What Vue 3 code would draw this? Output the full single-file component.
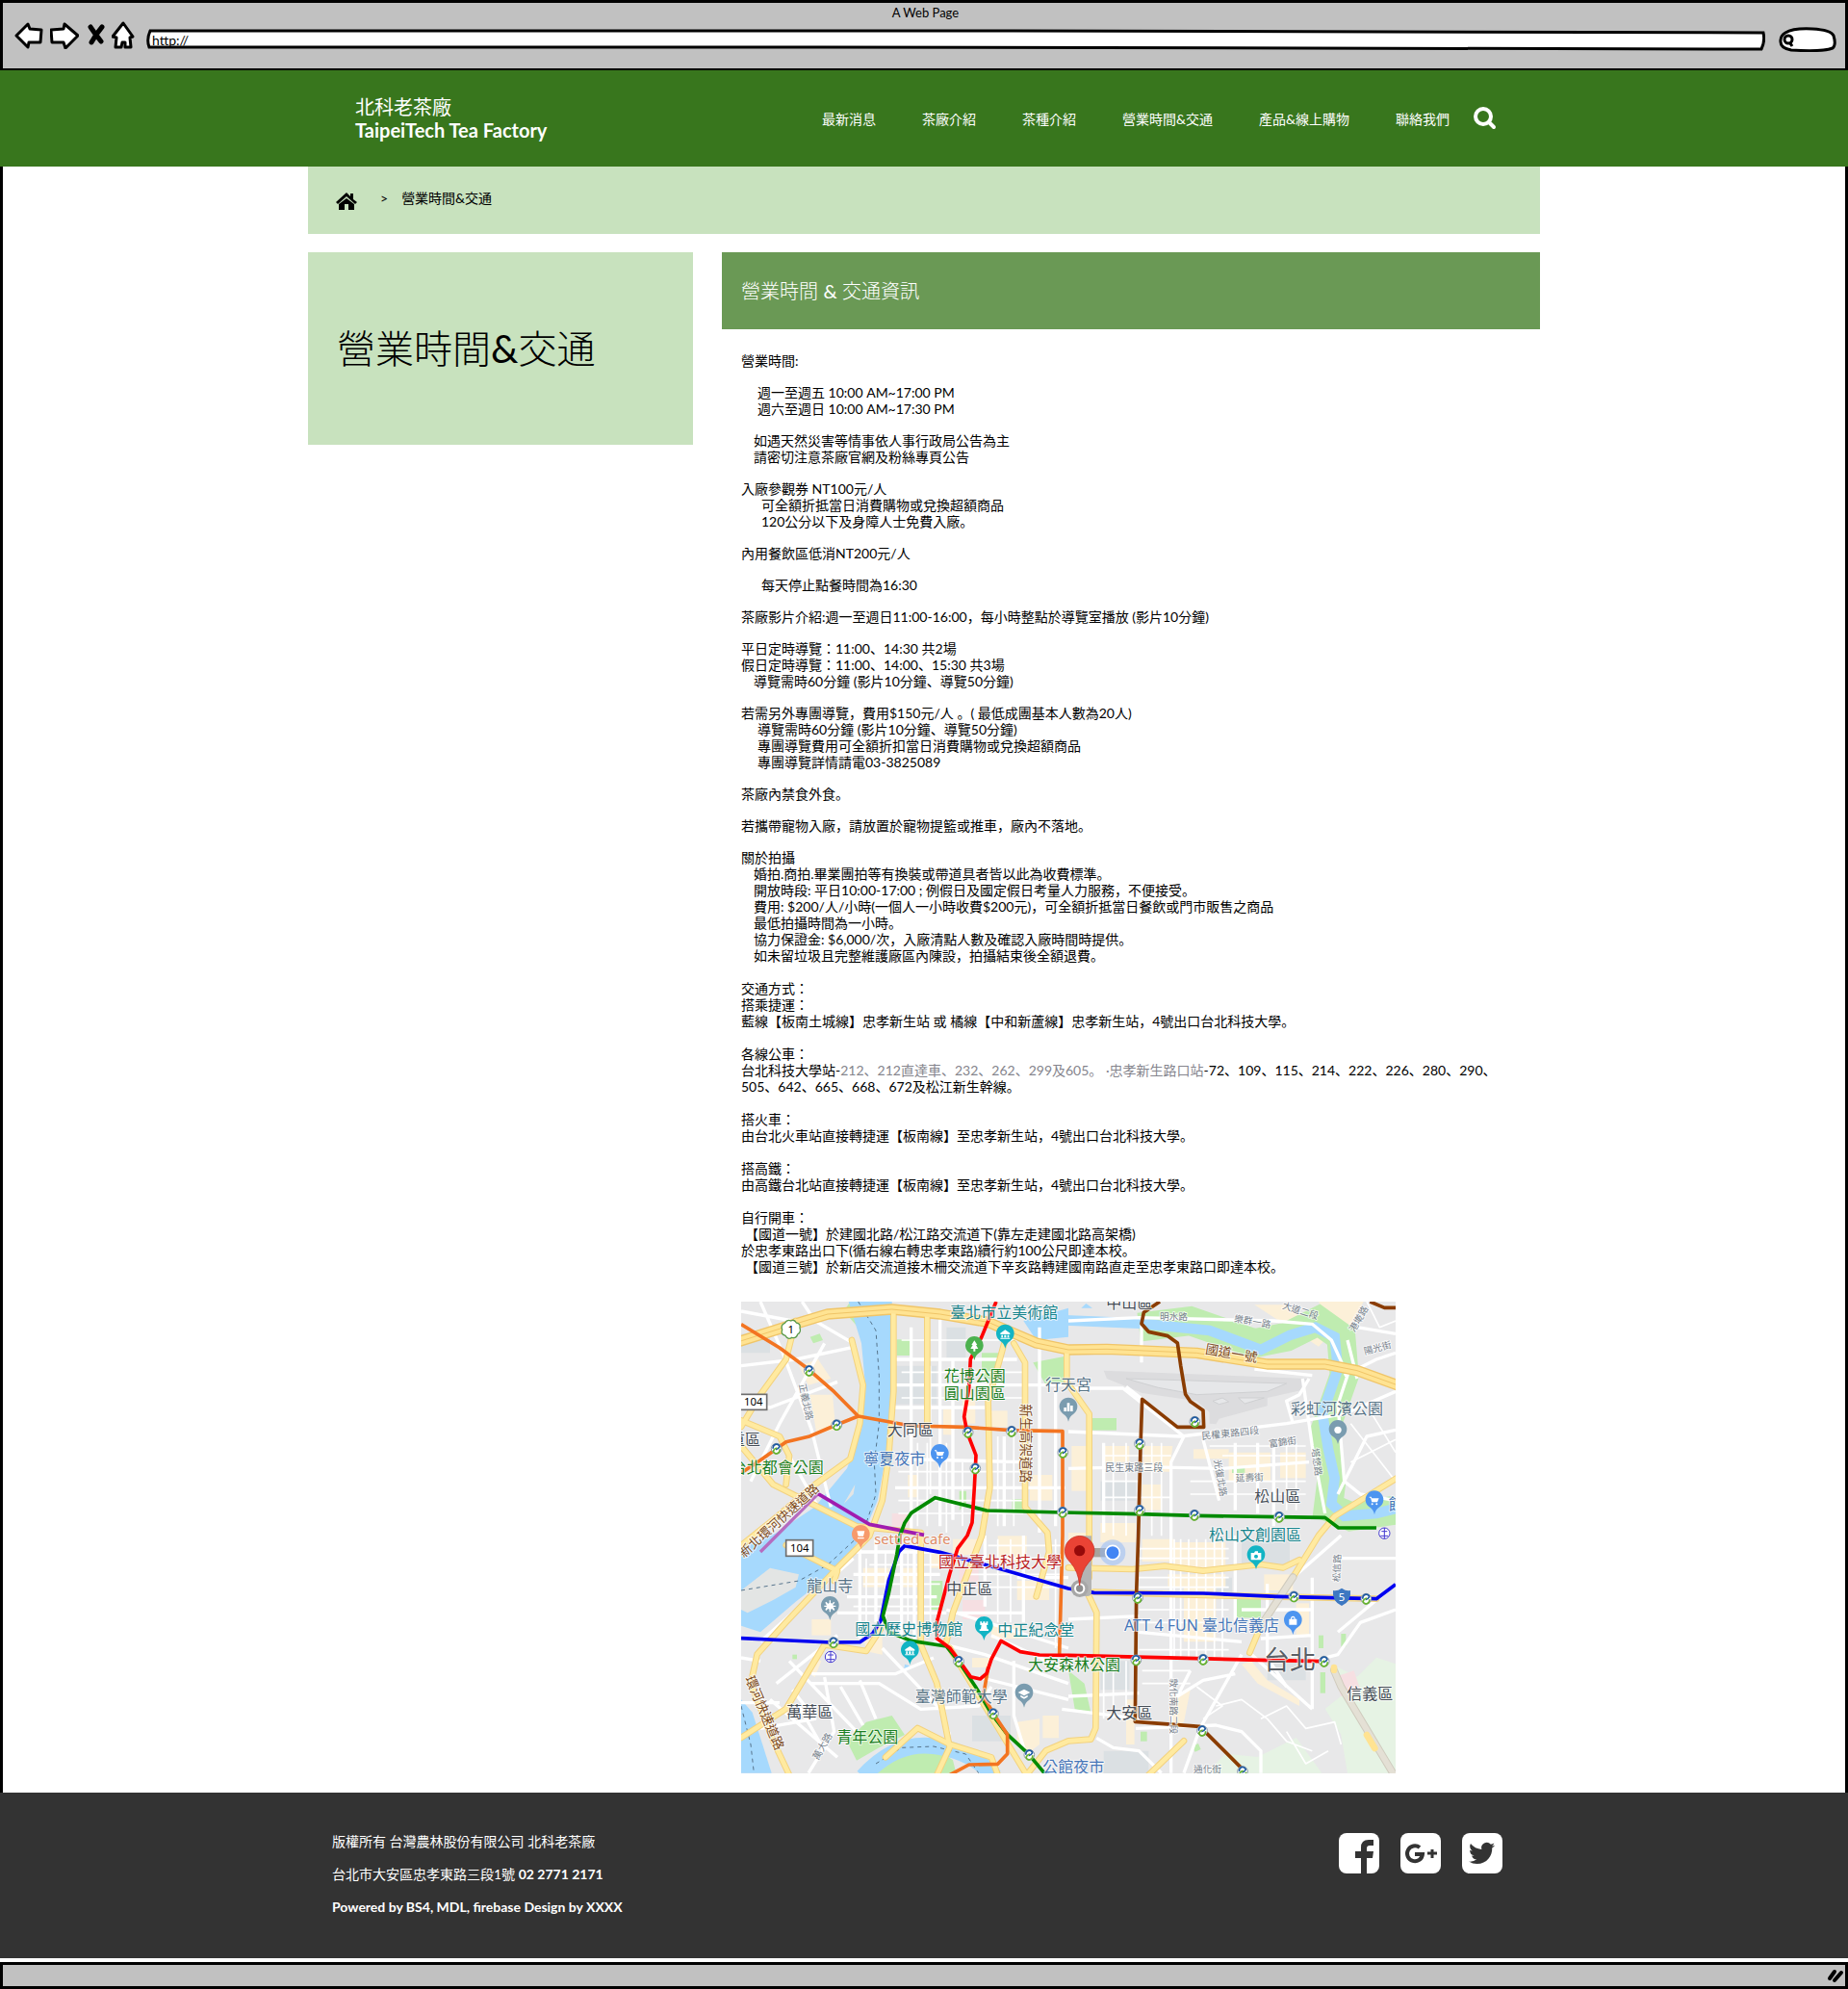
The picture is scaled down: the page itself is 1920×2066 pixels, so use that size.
<script setup>
import { ref } from 'vue'

const address = ref('http://')
const keyword = ref('')

const navItems = ['最新消息', '茶廠介紹', '茶種介紹', '營業時間&交通', '產品&線上購物', '聯絡我們']

// Each block is a paragraph; each line is [indent level, text]
const hours = [
  [[0, '營業時間:']],
  [[4, '週一至週五 10:00 AM~17:00 PM'], [4, '週六至週日 10:00 AM~17:30 PM']],
  [[3, '如遇天然災害等情事依人事行政局公告為主'], [3, '請密切注意茶廠官網及粉絲專頁公告']],
  [[0, '入廠參觀券 NT100元/人'], [5, '可全額折抵當日消費購物或兌換超額商品'], [5, '120公分以下及身障人士免費入廠。']],
  [[0, '內用餐飲區低消NT200元/人']],
  [[5, '每天停止點餐時間為16:30']],
  [[0, '茶廠影片介紹:週一至週日11:00-16:00，每小時整點於導覽室播放 (影片10分鐘)']],
  [[0, '平日定時導覽：11:00、14:30 共2場'], [0, '假日定時導覽：11:00、14:00、15:30 共3場'], [3, '導覽需時60分鐘 (影片10分鐘、導覽50分鐘)']],
  [[0, '若需另外專團導覽，費用$150元/人 。( 最低成團基本人數為20人)'], [4, '導覽需時60分鐘 (影片10分鐘、導覽50分鐘)'], [4, '專團導覽費用可全額折扣當日消費購物或兌換超額商品'], [4, '專團導覽詳情請電03-3825089']],
  [[0, '茶廠內禁食外食。']],
  [[0, '若攜帶寵物入廠，請放置於寵物提籃或推車，廠內不落地。']],
  [[0, '關於拍攝'], [3, '婚拍.商拍.畢業團拍等有換裝或帶道具者皆以此為收費標準。'], [3, '開放時段: 平日10:00-17:00 ; 例假日及國定假日考量人力服務，不便接受。'], [3, '費用: $200/人/小時(一個人一小時收費$200元)，可全額折抵當日餐飲或門市販售之商品'], [3, '最低拍攝時間為一小時。'], [3, '協力保證金: $6,000/次，入廠清點人數及確認入廠時間時提供。'], [3, '如未留垃圾且完整維護廠區內陳設，拍攝結束後全額退費。']]
]

const transport = [
  [[0, '交通方式：'], [0, '搭乘捷運：'], [0, '藍線【板南土城線】忠孝新生站 或 橘線【中和新蘆線】忠孝新生站，4號出口台北科技大學。']],
  [[0, '各線公車：'], [0, '台北科技大學站-', '212、212直達車、232、262、299及605。 ·忠孝新生路口站', '-72、109、115、214、222、226、280、290、'], [0, '505、642、665、668、672及松江新生幹線。']],
  [[0, '搭火車：'], [0, '由台北火車站直接轉捷運【板南線】至忠孝新生站，4號出口台北科技大學。']],
  [[0, '搭高鐵：'], [0, '由高鐵台北站直接轉捷運【板南線】至忠孝新生站，4號出口台北科技大學。']],
  [[0, '自行開車：'], [1, '【國道一號】於建國北路/松江路交流道下(靠左走建國北路高架橋)'], [0, '於忠孝東路出口下(循右線右轉忠孝東路)續行約100公尺即達本校。'], [1, '【國道三號】於新店交流道接木柵交流道下辛亥路轉建國南路直走至忠孝東路口即達本校。']]
]

const parks = [
  'M485 118h48v50h-48z', 'M750 160l60 0-20 90-40-20z', 'M910 190l100-20 0 80-60 10z', 'M680 590l22 0 0 40-22 20z',
  'M845 615h40v35h-40z', 'M1095 363h75v38h-75z', 'M1530 516h40v18h-40z', 'M1545 925h75v60h-75z', 'M1020 1150l50 40 20 90-50-10z',
  'M590 870h38v90h-38z', 'M1800 1040h15v40h-15z', 'M1870 1035h15v40h-15z', 'M1805 1155h16v65h-16z', 'M215 110l30-10 10 20-30 10z',
  'M330 1370l60-60 80-20 40 60-80 40-70 40z', 'M1245 1340h20v30h-20z', 'M1405 1385l20-8 8 18-18 8z', 'M160 1100h14v14h-14z',
  'M340 0l80 90-20 30-80-90z', 'M300 560l60-60 40-100 0 120-80 90z', 'M420 1469l60-70 90-30 90 60 10 40z'
]
const hills = ['M1890 1469l-20-120-50-80 50-40-10-90 60 30 60-60 60 20v340z', 'M1450 1469l60-60 100 10 120-60 80 110z']
const blocks = [
  'M215 290l70 0 10 110-60 10z', 'M180 200l60-20 40 60-70 20z', 'M630 335h30v80h-30z', 'M780 340h50v50h-50z', 'M520 540h30v70h-30z',
  'M1030 450h50v140h-50z', 'M1130 450l80 0v50h-80z', 'M1255 450l90 0-10 80h-80z', 'M1410 460h110v30h-110z', 'M1520 470h130v90h-130z',
  'M1680 470h80v80h-80z', 'M1250 570h60v80h-60z', 'M1600 10l90 0 150 90-40 40z', 'M1800 0l140 0-60 110-30-10z', 'M1120 690h110v60h-110z',
  'M1250 740h100v70h-100z', 'M1020 720h60v80h-60z', 'M1330 850h180v40h-180z', 'M1380 880h100v180h-100z', 'M1630 850h90v50h-90z',
  'M1730 940h40v100h-40z', 'M1560 1130l50 60 130 70v-20l-100-60-50-60z', 'M1200 1240h26v140h-26z', 'M1340 1230l60-20-20 100-40 20z',
  'M780 1010h100v40h-100z', 'M860 1310l70-10v80l-40 30-30-30z', 'M940 1290h50v70h-50z', 'M660 740h80v50h-80z', 'M800 730h90v80h-90z',
  'M380 830h80v60h-80z', 'M220 990h60v50h-60z', 'M500 830h50v60h-50z', 'M720 1110h60v30h-60z', 'M380 1040l60 0 0 60-50-10z',
  'M590 760h30v70h-30z', 'M860 870h100v60h-100z', 'M200 1150l20-40 30 10-20 50z', 'M690 300h40v80h-40z', 'M900 540h70v80h-70z', 'M1350 750h160v80h-160z'
]
const waters = [
  'M335 0H470L478 150 470 300 452 480 425 620 385 715 330 800 280 850 170 935 60 1030 0 1010V770L110 720 230 640 330 520 375 400 388 270 375 130z',
  'M880 60l140-40v90l-100 10z', 'M0 1240l35 40 60 189H0z', 'M1060 20l15-14 20 14z', 'M510 1130l14 4-2 14-14-4z'
]
const minorRoads = [
  'M0 30L160 60M60 0L130 160L220 400L280 640M0 200L170 180L360 140M0 310L90 330L300 250M30 560L120 380L260 130M150 480L240 640M190 0L230 60L350 130',
  'M480 180H860M480 260H1030M480 330H760M480 490L880 500M480 580H1010M530 80V720M620 50V700M660 180V680M820 420V700M930 80V720M980 270V700',
  'M1020 60L1240 50L1660 60L1780 70L1840 120L1890 230L1860 320L1880 560L1930 600L2040 620M1020 270H1190L1380 420L1340 500V729M1248 70V190M1200 265L1250 304',
  'M1020 405L1370 420L1700 380L1880 350L2040 280M1020 520L1240 515L1500 520L1770 500M1130 440V720M1440 430L1490 620M1540 440V650M1610 440V660M1660 440V700M1750 240L1780 450L1820 660',
  'M1780 230L1600 210M1770 240L1740 290L1700 310L1720 380M1880 230L1980 180L2040 160M1920 80L2040 100M1890 120L1920 240M1860 600L1950 420L2040 400',
  'M1020 990L1240 980M1340 729V1469M1540 729V1000M1240 1030L1560 1060M1560 960H1780M1640 880V1000M1780 860V1270M1620 1050L1780 1040M1580 1090L1780 1270',
  'M1560 1100L1430 1330L1380 1469M1400 1150L1360 1230L1440 1180L1540 1160M1020 1230L1240 1220M1108 1360L1160 1390L1240 1400L1310 1469M1240 1300L1000 1270',
  'M1230 1330L1480 1320L1560 1340L1620 1400V1469M1780 1120L1860 1100L1930 1000L2040 960M1860 1030L2040 880M1720 860L1870 729M1860 800H2040M1640 960V1110L1700 1200',
  'M360 780H620M350 850H620M330 920H610M300 970H640M370 750V1050M420 740V1000M500 780V1060M540 770V1060M60 1060L350 800M110 1190L300 1040',
  'M220 1160H480L600 1110M220 1190L430 1190L560 1270L740 1260L780 1200M90 1240L300 1420M150 1120L360 1340M260 1170L290 1340L210 1469M440 1080L620 1270L650 1350',
  'M640 960L1020 1080M660 970H880M780 1040L1020 1150M850 1120V1290L890 1420M740 1170L1020 1240M600 1060L760 1100L1020 1190M860 860H1020M760 729V950M880 729V1000',
  'M0 1250H120M0 1110L60 1120M160 1210L230 1300L60 1330M180 1260L260 1400M310 1200L380 1320M370 1180L420 1300'
]
const fineRoads = [
  'M1350 740V1110M1370 740V1110M1395 740V1110M1420 740V1110M1448 740V1110M1475 740V1110M1500 740V1110M1240 770H1520M1240 800H1520M1240 860H1520M1240 890H1520M1240 960H1520M1240 1000H1520M1240 1085H1520',
  'M1130 480H1340M1130 560H1240M1130 610H1340M1160 440V730M1200 440V730M1280 440V730M1310 440V730M1400 560H1760M1400 600H1760M1460 450H1760M1500 480H1760M1700 440V650M1730 440V650',
  'M640 440V720M690 500V700M550 440V700M580 440V700M490 530H880M490 620H880M490 660H880M800 420V700M850 420V700M500 300H880M590 200V600M500 120H880M500 220H880',
  'M390 800V1000M450 780V1000M520 780V1050M590 780V1000M400 820H620M380 880H620M350 950H620M770 760H1000M770 800H1000M700 850H1000M700 890H1000M800 740V1000M840 740V1000M980 740V1080M1130 1120V1300M1160 1120V1300M1200 1120V1300M1250 1150H1400M1250 1190H1400',
  'M1620 1300L1700 1260L1760 1330L1850 1310L1870 1380M1480 1260L1560 1240L1640 1300L1700 1370L1780 1400M1420 1200L1500 1260L1440 1300M1960 340L2040 470M1900 380L2040 560M1900 500L2040 430M1950 0L1990 80L2040 60M1700 1340L1760 1440L1830 1400'
]
const yellowRoads = [
  'M475 30V280L460 480L440 620L400 730L300 830L140 999L50 1099L30 1189L100 1369L150 1475', 'M170 60L140 180L60 290L0 390', 'M345 120L380 260L370 380L340 490L230 570L100 680L0 760',
  'M0 370L120 420L150 480L140 570', 'M0 450L100 570L360 700L560 720', 'M580 40V380', 'M820 130L770 310L775 580L750 730L660 969L640 1060', 'M850 130L885 190V640L955 720L960 780L920 919',
  'M1015 150V250L1085 350V860', 'M1020 829L1220 834L1320 824L1440 839L1620 819L1690 829L1740 805', 'M2045 549L1850 669L1800 729L1720 859', 'M1620 1010L1585 1094',
  'M1080 909L1108 969L1105 1329L1090 1364L1020 1369L950 1399L890 1475', 'M1380 1369L1270 1475', 'M560 729V1069L610 1189L650 1389L610 1475', 'M0 1359L140 1269L260 1069L390 1089L435 1020',
  'M650 1079L890 1475', 'M450 1420L550 1329L650 1379L780 1420L800 1475', 'M140 759L300 839L290 870', 'M1980 926L1440 915L1100 905'
]
const highways = ['M-5 124L170 69L270 39L470 24L620 39L770 64L920 129L1020 150L1140 148L1420 160L1640 195L1820 195L1920 215L2045 260']

const transit = [
  { c: '#a01cb0', d: 'M240 599L400 694L570 727' },
  { c: '#f37421', d: 'M0 71L120 144L210 211L290 281L365 357L530 387L700 391L840 401L1002 404L1002 729L992 1099' },
  { c: '#f37421', d: 'M0 534L60 494L140 437L210 421L290 387L365 357' },
  { c: '#0000f0', d: 'M0 1049L150 1056L280 1062L370 1061L410 1034L435 994L460 869L492 779L510 761L620 781L830 839L1020 894L1100 907L1440 909L1670 919L1980 926L2040 881' },
  { c: '#008a00', d: 'M1980 705H1862L1820 673L1670 671L1420 667L1240 662L1002 657L765 651L605 611L530 659L510 689L495 729L485 789L460 909L442 979L460 1029L530 1057L640 1074L680 1124L730 1199L780 1284L830 1349L895 1409L950 1475' },
  { c: '#f37421', d: 'M770 1139L755 1229L790 1289L830 1349V1409L800 1441L710 1443L650 1475' },
  { c: '#ff0000', d: 'M795 0L750 109L715 179L710 269L695 359L705 409L732 479L727 579L720 689L705 729L675 769L650 849L610 999V1049L650 1079L680 1119L715 1169L745 1176L765 1159L780 1114L810 1057L870 1091L930 1101L1020 1102L1420 1112L1620 1117L1815 1121' },
  { c: '#8a3c00', d: 'M1305 0L1255 34L1248 69L1270 94L1330 107L1360 129L1370 199L1385 289L1400 311L1440 339L1442 391H1360L1250 304L1245 449L1238 729L1232 909L1228 1309L1430 1324L1565 1459' },
  { c: '#8a3c00', d: 'M1960 0L2005 19H2040' }
]

const stations = [
  [212, 215], [298, 384], [110, 458], [707, 407], [843, 404], [730, 520], [1003, 470], [1002, 656], [1414, 374], [1242, 443], [1242, 650], [1413, 665], [1677, 671],
  [288, 1062], [678, 1121], [786, 1284], [898, 1412], [1236, 923], [1723, 919], [1948, 926], [1231, 1117], [1440, 1115], [1817, 1121], [1437, 1337], [1563, 1464]
]

const glyphs = {
  museum: 'M-15-4L0-14L15-4V0H-15zM-12 2H-7V10H-12zM-3 2H3V10H-3zM7 2H12V10H7zM-15 11H15V14H-15z',
  tree: 'M0-18L9-4H5L12 8H3V16H-3V8H-12L-5-4H-9z',
  cart: 'M-16-12H-10L-8-7H14L9 5H-8L-12-9H-16zM-7 8A3 3 0 1 0-7 14A3 3 0 1 0-7 8M7 8A3 3 0 1 0 7 14A3 3 0 1 0 7 8',
  bars: 'M-14 0H-6V12H-14zM-4-14H4V12H-4zM6-6H14V12H6z',
  dot: 'M0-11A11 11 0 1 0 0 11A11 11 0 1 0 0-11',
  cup: 'M-12-12H12L8 4H-8zM-10 8H10V12H-10z',
  wheel: 'M-2-18H2V-10A10 10 0 0 1 6-8L12-14L15-11L9-5A10 10 0 0 1 10-2H18V2H10L15 11L12 14L6 8L2 10V18H-2V10L-6 8L-12 14L-15 11L-10 2H-18V-2H-10L-15-11L-12-14L-6-8L-2-10z',
  tower: 'M-12-15H-7V-11H-3V-15H3V-11H7V-15H12V-4H8L10 9H14V14H-14V9H-10L-8-4H-12z',
  school: 'M0-13L19-3L0 7L-19-3zM-11 5L0 11L11 5V11L0 17L-11 11z',
  camera: 'M-16-8H-6L-3-13H6V-8H16V14H-16zM0-3A6 6 0 1 1 0 9A6 6 0 1 1 0-3',
  bag: 'M-12-5H-7A7 9 0 0 1 7-5H12V13H-12zM-4-5H4A4 5 0 0 0-4-5'
}
const pins = [
  [823, 102, '#12b4c4', 'museum'], [727, 139, '#4bb14e', 'tree'], [619, 475, '#4d95f0', 'cart'], [1020, 330, '#7a9caf', 'bars'], [1860, 400, '#7a9caf', 'dot'], [1974, 620, '#4d95f0', 'cart'],
  [373, 727, '#f79a6b', 'cup'], [277, 949, '#7a9caf', 'wheel'], [526, 1088, '#12b4c4', 'museum'], [757, 1012, '#12b4c4', 'tower'], [882, 1221, '#7a9caf', 'school'], [1605, 791, '#12b4c4', 'camera'], [1720, 994, '#4d95f0', 'bag']
]

const TEAL = '#16848c'
const PARK = '#1b7f22'
const SLATE = '#587487'
const DARK = '#454d56'
const BLUE = '#4676b8'
const GREY = '#77828c'
const BROWN = '#7c4a1c'
// [text, x, baseline, size, colour, rotation]
const labels = [
  ['臺北市立美術館', 652, 51, 48, TEAL, 0], ['花博公園', 632, 249, 48, PARK, 0], ['圓山園區', 632, 303, 48, PARK, 0], ['行天宮', 948, 276, 48, SLATE, 0],
  ['大同區', 455, 418, 48, DARK, 0], ['寧夏夜市', 382, 507, 48, BLUE, 0], ['台北都會公園', -31, 534, 48, PARK, 0], ['三重區', -84, 448, 48, DARK, 0],
  ['settled cafe', 415, 755, 44, '#e08a62', 0], ['新生高架道路', 873, 319, 41, BROWN, 90], ['新北環河快速道路', 8, 800, 40, BROWN, -42], ['正義北路', 180, 258, 29, GREY, 78],
  ['環河快速道路', 12, 1174, 41, BROWN, 67], ['龍山寺', 205, 903, 48, SLATE, 0], ['國立歷史博物館', 355, 1037, 48, TEAL, 0], ['中正區', 640, 911, 48, DARK, 0],
  ['中正紀念堂', 799, 1042, 48, TEAL, 0], ['大安森林公園', 894, 1149, 48, PARK, 0], ['國立臺北科技大學', 615, 827, 48, '#bb1f25', 0], ['臺灣師範大學', 542, 1247, 48, SLATE, 0],
  ['萬華區', 142, 1296, 48, DARK, 0], ['青年公園', 298, 1374, 48, PARK, 0], ['萬大路', 240, 1430, 30, GREY, -60], ['公館夜市', 940, 1466, 48, BLUE, 0],
  ['中山區', 1138, 21, 48, DARK, 0], ['明水路', 1305, 56, 29, GREY, 0], ['樂群一路', 1535, 62, 29, GREY, 10], ['港墘路', 1912, 97, 29, GREY, -60], ['陽光街', 1944, 166, 29, GREY, -15],
  ['大道二段', 1685, 20, 29, GREY, 18], ['國道一號', 1445, 161, 41, BROWN, 10], ['彩虹河濱公園', 1713, 351, 48, SLATE, 0], ['民權東路四段', 1436, 430, 30, GREY, -6],
  ['富錦街', 1646, 454, 29, GREY, -8], ['民生東路三段', 1135, 527, 30, GREY, 0], ['光復北路', 1474, 494, 29, GREY, 80], ['延壽街', 1542, 561, 29, GREY, -3], ['塔悠路', 1778, 458, 29, GREY, 82],
  ['松山區', 1600, 624, 48, DARK, 0], ['松山文創園區', 1458, 744, 48, TEAL, 0], ['館', 2018, 649, 48, BLUE, 0], ['松信路', 1866, 874, 29, GREY, -88],
  ['ATT 4 FUN 臺北信義店', 1194, 1026, 48, BLUE, 0], ['台北', 1628, 1146, 82, '#5a5f66', 0], ['信義區', 1888, 1240, 48, DARK, 0], ['大安區', 1138, 1298, 48, DARK, 0],
  ['敦化南路二段', 1338, 1174, 29, GREY, 90], ['通化街', 1410, 1467, 29, GREY, 0]
]
</script>

<template>
  <div class="browser">
    <header class="chrome">
      <div class="chrome-title">A Web Page</div>
      <div class="toolbar">
        <div class="tools">
          <button type="button" aria-label="Back">
            <svg width="30" height="28" viewBox="0 0 30 28"><path class="ink" d="M2 14L14 2L16 7L28 8L27 21L15 21L14 26Z" /></svg>
          </button>
          <button type="button" aria-label="Forward">
            <svg width="30" height="28" viewBox="0 0 30 28"><path class="ink" d="M1 8L14 7L15 2L29 14L16 27L14 21L2 21Z" /></svg>
          </button>
          <button type="button" aria-label="Stop">
            <svg width="20" height="28" viewBox="0 0 20 28"><path d="M5 5Q9 11 16 20M17 5Q11 12 6 21" fill="none" stroke="#000" stroke-width="5" stroke-linecap="round" /></svg>
          </button>
          <button type="button" aria-label="Home">
            <svg width="24" height="30" viewBox="0 0 24 30"><path class="ink" d="M12 2L22 16L19 17L20 27L14 27L14 22L11 22L10 27L4 27L5 17L1 16Z" /></svg>
          </button>
        </div>
        <div class="sketch-field address">
          <svg viewBox="0 0 1680 24" preserveAspectRatio="none" aria-hidden="true"><path d="M4 3L900 3L1678 5Q1680 14 1676 22L700 20L3 20Q0 12 4 3Z" /></svg>
          <input v-model="address" type="text" aria-label="Address" />
        </div>
        <div class="sketch-field lookup">
          <svg viewBox="0 0 60 26" aria-hidden="true">
            <path d="M7 6Q15 1 35 2Q54 3 57 9Q60 19 56 22Q45 26 13 24Q1 22 2 14Q2 9 7 6Z" />
            <circle cx="10" cy="13" r="4" /><path d="M12 17L14 20" />
          </svg>
          <input v-model="keyword" type="text" aria-label="Search the web" />
        </div>
      </div>
    </header>

    <div class="site-header">
      <div class="container site-bar">
        <a class="brand" href="#"><span>北科老茶廠</span><b>TaipeiTech Tea Factory</b></a>
        <nav aria-label="主選單">
          <a v-for="item in navItems" :key="item" href="#">{{ item }}</a>
        </nav>
        <button class="site-search" type="button" aria-label="搜尋">
          <svg width="26" height="26" viewBox="0 0 26 26"><circle cx="11" cy="11" r="8" fill="none" stroke="#fff" stroke-width="4" /><path d="M17 17L22 22" stroke="#fff" stroke-width="4" stroke-linecap="round" /></svg>
        </button>
      </div>
    </div>

    <main class="page">
      <div class="container">
        <nav class="crumbs" aria-label="麵包屑">
          <a href="#" aria-label="首頁">
            <svg width="22" height="18" viewBox="0 0 22 18"><path d="M11 0L15 4V1H18V7L22 10L20 12L11 4L2 12L0 10Z" /><path d="M11 6L19 12V18H13V12H9V18H3V12Z" /></svg>
          </a>
          <span>&gt;</span>
          <span>營業時間&amp;交通</span>
        </nav>
        <div class="columns">
          <aside><h1>營業時間<b>&amp;</b>交通</h1></aside>
          <section class="content">
            <h2>營業時間 <b>&amp;</b> 交通資訊</h2>
            <div class="article">
              <div class="hours">
                <div v-for="(block, i) in hours" :key="i">
                  <p v-for="line in block" :key="line[1]" :class="'indent-' + line[0]">{{ line[1] }}</p>
                </div>
              </div>
              <div class="transport">
                <div v-for="(block, i) in transport" :key="i">
                  <p v-for="line in block" :key="line[1]" :class="'indent-' + line[0]">{{ line[1] }}<span v-if="line[2]" class="muted">{{ line[2] }}</span>{{ line[3] }}</p>
                </div>
              </div>

              <svg class="map" viewBox="0 0 2040 1470" role="img" aria-label="國立臺北科技大學 地圖">
                <rect width="2040" height="1470" fill="#e8e8e9" />
                <path d="M480 200h130v120h-130zM640 80h60v100h-60zM1130 1400h140v70h-140zM1440 860h90v60h-90zM1120 1120h90v90h-90zM1640 1120h120v60h-120zM720 1290h120v80h-120zM1120 560h110v60h-110zM0 100h90v60H0zM1560 740h150v80h-150z" fill="#dbe0e3" />
                <path v-for="d in hills" :key="d" :d="d" fill="#e6f3e4" />
                <path v-for="d in blocks" :key="d" :d="d" fill="#fcf0d8" />
                <path d="M680 830h60v60h-60zM690 930h70v60h-70zM470 660h60v40h-60zM1850 1170l60-20 20 60-60 20z" fill="#f6dfe2" />
                <path d="M1240 80L1400 60L1600 130L1700 110L1800 60L1870 110L1880 230L1820 400L1840 560L1830 640L1900 670L2040 650" fill="none" stroke="#bfecb0" stroke-width="90" />
                <path v-for="d in parks" :key="d" :d="d" fill="#bfecb0" />
                <path v-for="d in waters" :key="d" :d="d" fill="#a6d9fd" />
                <path d="M1010 58L1240 68L1460 90L1620 150L1710 105L1790 80L1850 110L1860 210L1812 350L1830 460L1850 550L1840 630L1880 668L1980 660L2040 645" fill="none" stroke="#a6d9fd" stroke-width="32" />
                <path d="M380 1480Q480 1370 600 1385T790 1480" fill="none" stroke="#a6d9fd" stroke-width="50" />
                <path d="M0 900L90 830L180 850L170 890L100 930L20 970L0 960ZM320 630L355 570L350 600Z" fill="#e3e5e4" />
                <path d="M1130 215L1765 240L1750 275L1640 300L1640 325L1490 365L1480 382L1460 380V345L1420 310L1250 285L1140 240Z" fill="#dcdcde" />
                <path d="M1200 240L1700 255L1640 280L1420 290L1300 268ZM1470 310L1500 300L1520 312L1490 320ZM1550 300L1630 300L1570 318Z" fill="#e6e7e9" stroke="#cfd0d2" stroke-width="3" />
                <g fill="none" stroke="#fff" stroke-linejoin="round">
                  <path v-for="d in fineRoads" :key="d" :d="d" stroke-width="5" />
                  <path v-for="d in minorRoads" :key="d" :d="d" stroke-width="10" />
                </g>
                <path d="M365 0L420 90L430 230L430 380L415 500L420 600L390 690M0 900L180 870L270 820L400 700M0 1260L30 1380L40 1469M420 1440L500 1390L600 1386L700 1410L740 1469" fill="none" stroke="#56748c" stroke-width="3" stroke-dasharray="12 12" />
                <g fill="none" stroke-linejoin="round" stroke-linecap="round">
                  <path v-for="d in yellowRoads" :key="'e' + d" :d="d" stroke="#f3d27e" stroke-width="20" />
                  <path v-for="d in highways" :key="'e' + d" :d="d" stroke="#f0c568" stroke-width="34" />
                  <path v-for="d in yellowRoads" :key="d" :d="d" stroke="#ffeaa0" stroke-width="14" />
                  <path v-for="d in highways" :key="d" :d="d" stroke="#ffe392" stroke-width="26" />
                  <path v-for="d in highways" :key="'m' + d" :d="d" stroke="#f0c568" stroke-width="3" />
                  <path d="M1848 1149L1870 1200L2035 1475M1720 859L1620 1010" stroke="#cfcabd" stroke-width="24" />
                  <path d="M1848 1149L1870 1200L2035 1475M1720 859L1620 1010" stroke="#e4e0d5" stroke-width="18" />
                  <path d="M1950 1350L1975 1392M1848 1140V1148" stroke="#ffe392" stroke-width="20" />
                </g>
                <path d="M60 780L240 599" stroke="#b56cc0" stroke-width="10" />
                <path v-for="l in transit" :key="l.d" :d="l.d" :stroke="l.c" fill="none" stroke-width="11" stroke-linejoin="round" />

                <g v-for="s in stations" :key="s.join()" :transform="`translate(${s[0]} ${s[1]})`" fill="none">
                  <circle r="16" fill="#fff" stroke="#8a99a8" stroke-width="3" />
                  <path d="M-10 0A10 10 0 0 1 10-6Q6 2-2 3" stroke="#1e5aa0" stroke-width="5" />
                  <path d="M10 2A10 10 0 0 1-10 8Q-6-1 2-2" stroke="#66b32e" stroke-width="5" />
                </g>
                <g v-for="m in [[279, 1107], [2005, 722]]" :key="m[0]" :transform="`translate(${m[0]} ${m[1]})`" fill="#fff" stroke="#4338cf" stroke-width="3">
                  <circle r="17" /><path d="M0-17V17M-9-6H9M-12 8H12" />
                </g>

                <rect x="-10" y="289" width="90" height="48" fill="#fff" stroke="#6e6e6e" stroke-width="5" />
                <rect x="140" y="743" width="84" height="50" fill="#fff" stroke="#6e6e6e" stroke-width="5" />
                <path d="M155 60Q165 54 172 66Q186 68 183 82Q188 96 176 102Q172 116 158 112Q146 120 138 106Q122 102 128 88Q122 72 136 67Q144 54 155 60Z" fill="#fff" stroke="#5a9a4a" stroke-width="4" />
                <path d="M1845 900Q1858 903 1872 893Q1886 903 1899 900Q1903 934 1872 948Q1841 934 1845 900Z" fill="#3d78c2" />
                <g class="badge">
                  <text x="38" y="325">104</text><text x="182" y="780">104</text><text x="155" y="100">1</text><text x="1872" y="932" fill="#fff">5</text>
                </g>

                <g class="map-labels">
                  <text v-for="t in labels" :key="t[0] + t[1]" :transform="`translate(${t[1]} ${t[2]}) rotate(${t[5]})`" :font-size="t[3]" :fill="t[4]">{{ t[0] }}</text>
                </g>

                <g v-for="p in pins" :key="p[0]" :transform="`translate(${p[0]} ${p[1]})`">
                  <path d="M0 44Q-3 28-16 20A28 28 0 1 1 16 20Q3 28 0 44Z" :fill="p[2]" />
                  <path :d="glyphs[p[3]]" fill="#fff" fill-rule="evenodd" />
                </g>

                <path d="M1050 730H1092V905Q1092 918 1078 918H1050Z" fill="#b4b4b4" />
                <path d="M1085 782H1158" stroke="#a8a39c" stroke-width="28" />
                <circle cx="1158" cy="782" r="40" fill="#8fb8f5" fill-opacity="0.5" />
                <circle cx="1158" cy="782" r="22" fill="#4285f4" stroke="#fff" stroke-width="5" />
                <circle cx="1055" cy="894" r="27" fill="#a7a7a7" />
                <circle cx="1055" cy="894" r="14" fill="#8e8e8e" stroke="#fff" stroke-width="6" />
                <path d="M1055 885Q1051 840 1026 812A46 46 0 1 1 1084 812Q1059 840 1055 885Z" fill="#ea4335" stroke="#c5291c" stroke-width="2" />
                <circle cx="1055" cy="776" r="17" fill="#960a0a" />
              </svg>
            </div>
          </section>
        </div>
      </div>
    </main>

    <footer class="site-footer">
      <div class="container footer-bar">
        <div class="legal">
          <p>版權所有 台灣農林股份有限公司 北科老茶廠</p>
          <p>台北市大安區忠孝東路三段1號 <b>02 2771 2171</b></p>
          <p><b>Powered by BS4, MDL, firebase Design by XXXX</b></p>
        </div>
        <div class="social">
          <a href="#" aria-label="Facebook">
            <svg viewBox="0 0 42 42"><rect width="42" height="42" rx="8" fill="#fff" /><path d="M23 42V26H17V19H23V15Q23 7 31 7H36V13H32Q29 13 29 16V19H36L35 26H29V42Z" fill="#333" /></svg>
          </a>
          <a href="#" aria-label="Google Plus">
            <svg viewBox="0 0 42 42"><rect width="42" height="42" rx="8" fill="#fff" /><path d="M20 15A8 8 0 1 0 23 22H15" fill="none" stroke="#333" stroke-width="4" /><path d="M33 17V26M28 21H38" stroke="#333" stroke-width="3" /></svg>
          </a>
          <a href="#" aria-label="Twitter">
            <svg viewBox="0 0 42 42"><rect width="42" height="42" rx="8" fill="#fff" /><path transform="translate(7 7) scale(1.15)" d="M23.6 4.9a9.6 9.6 0 0 1-2.8.8 4.9 4.9 0 0 0 2.1-2.7 9.8 9.8 0 0 1-3 1.2 4.8 4.8 0 0 0-8.3 4.4A13.7 13.7 0 0 1 1.7 3.5a4.8 4.8 0 0 0 1.5 6.5 4.8 4.8 0 0 1-2.2-.6v.1a4.8 4.8 0 0 0 3.9 4.7 4.8 4.8 0 0 1-2.2.1 4.8 4.8 0 0 0 4.5 3.4A9.7 9.7 0 0 1 0 19.6a13.7 13.7 0 0 0 7.4 2.2c9 0 14-7.6 13.7-14.4a9.8 9.8 0 0 0 2.5-2.5z" fill="#333" /></svg>
          </a>
        </div>
      </div>
    </footer>

    <div class="status">
      <svg width="20" height="18" viewBox="0 0 20 18" aria-hidden="true"><path d="M4 12L9 5M9 14L16 6" stroke="#000" stroke-width="4" stroke-linecap="round" /></svg>
    </div>
  </div>
</template>

<style>
body {
  margin: 0;
  background: #fff;
}
</style>

<style scoped>
* {
  box-sizing: border-box;
}

.browser {
  font-family: Lato, "Noto Sans CJK JP", sans-serif;
  font-size: 14px;
  line-height: 17px;
  color: #000;
}

p,
h1,
h2 {
  margin: 0;
}

a {
  color: inherit;
  text-decoration: none;
}

button {
  display: flex;
  padding: 0;
  border: 0;
  background: none;
}

svg {
  display: block;
}

.container {
  width: 100%;
  max-width: 1280px;
  margin: 0 auto;
}

/* Browser frame */
.chrome {
  height: 73px;
  padding: 2px 9px 0 12px;
  border: 3px solid #000;
  border-bottom-width: 2px;
  background: #c1c1c1;
}

.chrome-title {
  font-size: 13px;
  line-height: 16px;
  text-align: center;
}

.toolbar {
  display: flex;
  align-items: center;
  height: 34px;
  margin-top: 1px;
}

.tools {
  display: flex;
  align-items: center;
  gap: 7px;
  margin: 0 12px 4px 0;
}

.ink {
  fill: #fff;
  stroke: #000;
  stroke-width: 3px;
  stroke-linejoin: round;
}

.sketch-field {
  display: grid;
  margin-top: 4px;
}

.sketch-field > * {
  grid-area: 1 / 1;
  width: 100%;
  height: 100%;
}

.sketch-field path,
.sketch-field circle {
  fill: #fff;
  stroke: #000;
  stroke-width: 3px;
  vector-effect: non-scaling-stroke;
}

.sketch-field input {
  min-width: 0;
  padding: 0 6px;
  border: 0;
  background: transparent;
  font: inherit;
  outline: none;
}

.address {
  flex: 1;
  height: 24px;
}

.lookup {
  flex: none;
  width: 60px;
  height: 26px;
  margin-left: 14px;
}

.lookup input {
  padding-left: 20px;
}

/* Site header */
.site-header {
  background: #38761d;
  color: #fff;
}

.site-bar {
  display: flex;
  align-items: center;
  height: 100px;
  padding: 0 44px 0 49px;
}

.brand {
  display: grid;
  margin-right: auto;
  font-size: 20px;
  line-height: 24px;
}

.site-bar nav {
  display: flex;
  gap: 48px;
}

.site-search {
  margin-left: 24px;
}

/* Page */
.page {
  padding-bottom: 20px;
  border: solid #000;
  border-width: 0 3px;
}

.crumbs {
  display: flex;
  align-items: flex-start;
  height: 70px;
  padding: 24px 29px 0;
  background: #c8e2be;
}

.crumbs a {
  padding-top: 3px;
}

.crumbs span:nth-child(2) {
  margin: 0 14px 0 24px;
}

.columns {
  display: flex;
  align-items: flex-start;
  gap: 30px;
  margin-top: 19px;
}

aside {
  display: flex;
  align-items: center;
  flex: 0 0 400px;
  height: 200px;
  padding: 0 30px;
  background: #c8e2be;
}

h1 {
  font-size: 40px;
  font-weight: 300;
  line-height: 48px;
}

.content {
  flex: 1;
  min-width: 0;
}

h2 {
  padding: 28px 20px;
  background: #6a9955;
  color: #fff;
  font-size: 20px;
  font-weight: 300;
  line-height: 24px;
}

.article {
  padding: 24px 20px 0;
}

.article p {
  white-space: nowrap;
}

.hours,
.transport {
  display: grid;
  gap: 16px;
}

.transport {
  gap: 17px;
  margin-top: 17px;
}

.indent-1 {
  padding-left: 4px;
}

.indent-3 {
  padding-left: 13px;
}

.indent-4 {
  padding-left: 17px;
}

.indent-5 {
  padding-left: 21px;
}

.muted {
  color: #85858d;
}

.map {
  width: 100%;
  max-width: 680px;
  margin-top: 28px;
  overflow: hidden;
}

.map-labels {
  font-family: "Noto Sans", "Noto Sans CJK TC", sans-serif;
  paint-order: stroke;
  stroke: rgba(255, 255, 255, 0.7);
  stroke-width: 6px;
  stroke-linejoin: round;
}

.badge {
  font-family: "Noto Sans", sans-serif;
  font-size: 34px;
  text-anchor: middle;
}

/* Footer */
.site-footer {
  background: #333;
  color: #fff;
}

.footer-bar {
  display: flex;
  justify-content: space-between;
  align-items: flex-start;
  height: 172px;
  padding: 42px 39px 0 25px;
}

.legal {
  display: grid;
  gap: 17px;
}

.social {
  display: flex;
  gap: 22px;
}

.social svg {
  width: 42px;
  height: 42px;
}

.status {
  display: flex;
  align-items: center;
  justify-content: flex-end;
  height: 28px;
  margin-top: 4px;
  border: 3px solid #000;
  background: #c1c1c1;
}
</style>
